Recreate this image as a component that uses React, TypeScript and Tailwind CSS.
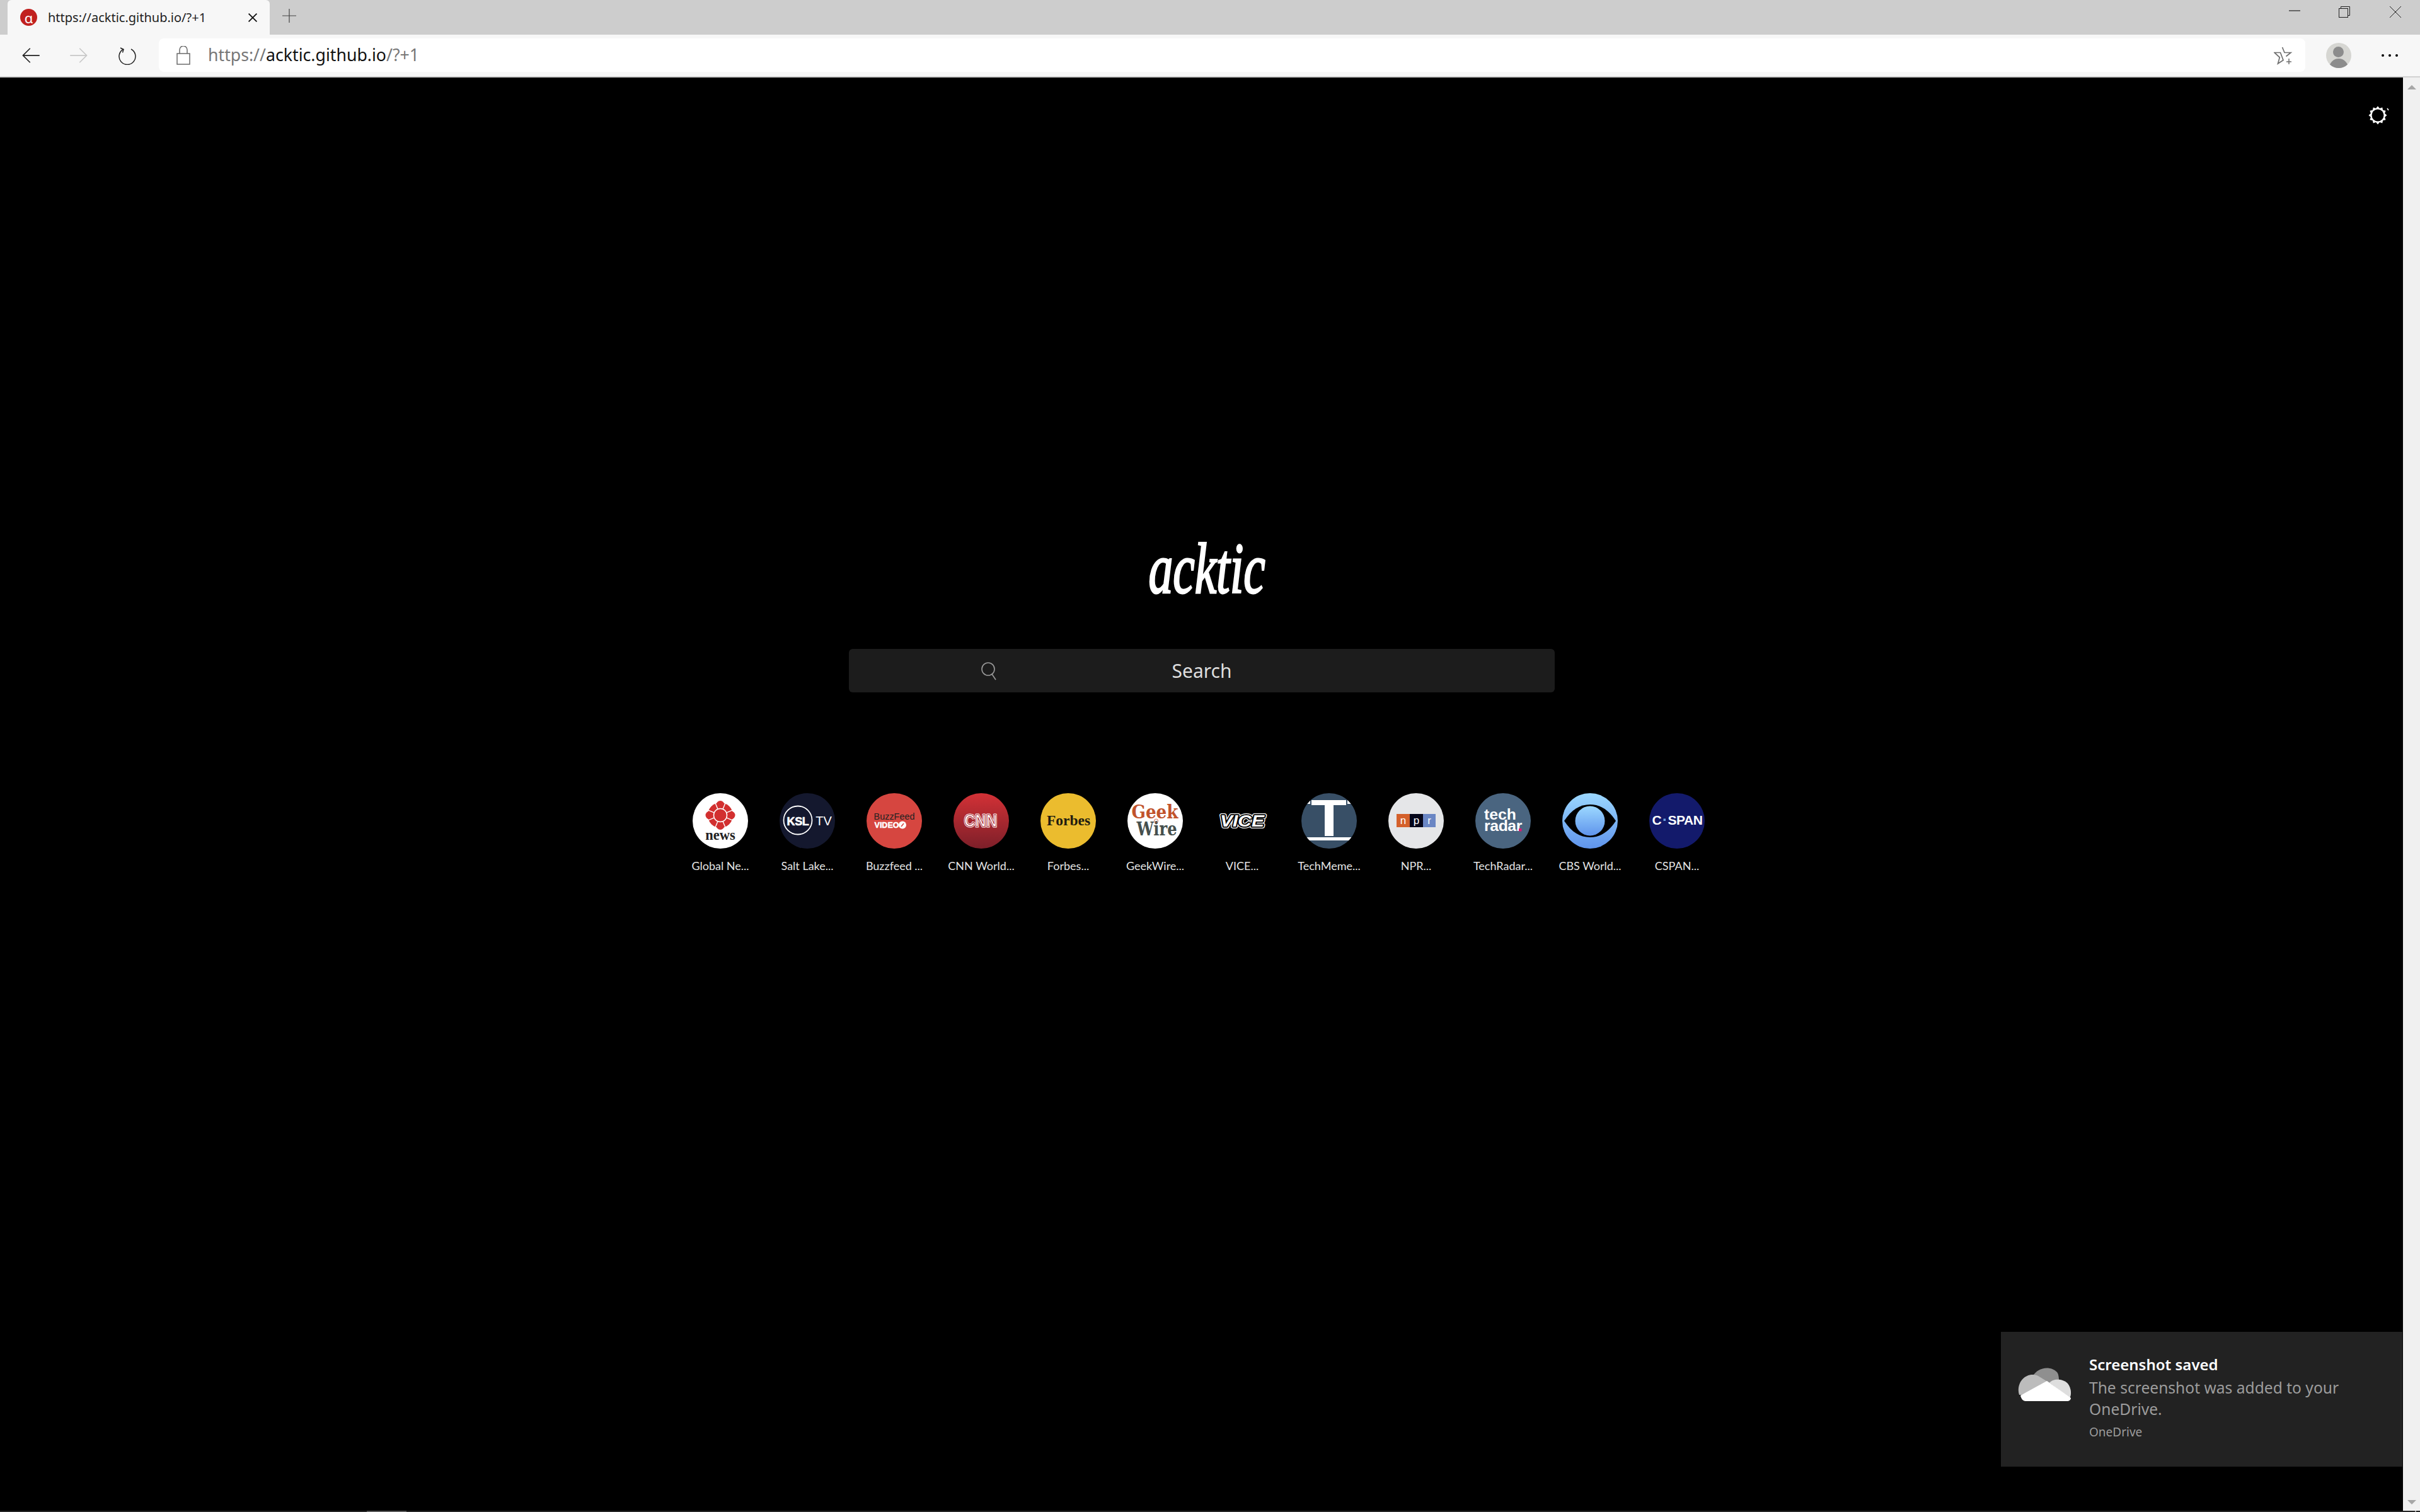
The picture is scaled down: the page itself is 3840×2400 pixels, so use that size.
import React from "react";

const sans = "font-['Lato',sans-serif]";
const T = ({ x, y, s, f = "#fff", w = 700, fam = "Liberation Sans", ls, tl, st, sw, children }: any) => (
  <text x={x} y={y} fontSize={s} fill={f} fontWeight={w} fontFamily={`'${fam}',sans-serif`} textAnchor="middle" letterSpacing={ls} textLength={tl} lengthAdjust={tl ? "spacingAndGlyphs" : undefined} stroke={st} strokeWidth={sw} strokeLinejoin="round">{children}</text>
);

const gearPoints = Array.from({ length: 24 }, (_, i) => {
  const r = i % 2 === 0 ? 14.5 : 11.5;
  const a = (i * Math.PI) / 12;
  return `${15 + r * Math.sin(a)},${15 - r * Math.cos(a)}`;
}).join(" ");

const gemAngles = [22.5, 67.5, 112.5, 157.5];

const logos: { label: string; logo: React.ReactNode }[] = [
  { label: "Global Ne...", logo: (
    <svg viewBox="0 0 88 88" className="h-[88px] w-[88px]">
      <circle cx="44" cy="44" r="44" fill="#fff" />
      <g fill="#d22f2f">
        <circle cx="44" cy="35" r="20" />
        <circle cx="44" cy="18.5" r="6.5" />
        <circle cx="44" cy="51.5" r="6.5" />
        <circle cx="27" cy="35" r="6.5" />
        <circle cx="61" cy="35" r="6.5" />
      </g>
      <g stroke="#fff" strokeWidth="1.4">
        {gemAngles.map((a) => (
          <line key={a} x1="44" y1="6" x2="44" y2="64" transform={`rotate(${a} 44 35)`} />
        ))}
      </g>
      <circle cx="44" cy="35" r="10.5" fill="#d22f2f" stroke="#fff" strokeWidth="1.5" />
      <T x="44" y="74" s="22.5" f="#222" fam="Liberation Serif">news</T>
    </svg>
  ) },
  { label: "Salt Lake...", logo: (
    <svg viewBox="0 0 88 88" className="h-[88px] w-[88px]">
      <circle cx="44" cy="44" r="44" fill="#14182e" />
      <circle cx="29" cy="43" r="22.5" fill="none" stroke="#fff" strokeWidth="1.8" />
      <T x="29" y="50.5" s="18" st="#fff" sw="0.6" ls="-0.3">KSL</T>
      <T x="70" y="51" s="20" w={400}>TV</T>
    </svg>
  ) },
  { label: "Buzzfeed ...", logo: (
    <svg viewBox="0 0 88 88" className="h-[88px] w-[88px]">
      <circle cx="44" cy="44" r="44" fill="#d64640" />
      <T x="44" y="42" s="14.4" f="#222" w={400}>BuzzFeed</T>
      <T x="32" y="55" s="12.5" st="#fff" sw="0.5">VIDEO</T>
      <circle cx="57" cy="50.5" r="6" fill="#fff" />
      <path d="M55 53l4-5" stroke="#d64640" strokeWidth="1.6" />
    </svg>
  ) },
  { label: "CNN World...", logo: (
    <svg viewBox="0 0 88 88" className="h-[88px] w-[88px]">
      <defs>
        <linearGradient id="cnn" x1="0" y1="0" x2="0" y2="1">
          <stop offset="0" stopColor="#d33136" />
          <stop offset="1" stopColor="#7d1f29" />
        </linearGradient>
      </defs>
      <circle cx="44" cy="44" r="44" fill="url(#cnn)" />
      <T x="43" y="53" s="28" tl="52" st="#fff" sw="3">CNN</T>
      <T x="43" y="53" s="28" tl="52" f="none" st="#aa262f" sw="1.1">CNN</T>
    </svg>
  ) },
  { label: "Forbes...", logo: (
    <svg viewBox="0 0 88 88" className="h-[88px] w-[88px]">
      <circle cx="44" cy="44" r="44" fill="#ebbc2e" />
      <T x="44.5" y="51" s="23.5" f="#1f1c10" fam="Liberation Serif">Forbes</T>
    </svg>
  ) },
  { label: "GeekWire...", logo: (
    <svg viewBox="0 0 88 88" className="h-[88px] w-[88px]">
      <circle cx="44" cy="44" r="44" fill="#fff" />
      <T x="43.5" y="40" s="30" f="#c1532b" fam="DejaVu Serif" tl="74">Geek</T>
      <T x="46.5" y="67" s="30" f="#46504e" fam="DejaVu Serif" tl="64">Wire</T>
      <circle cx="45.5" cy="44" r="3" fill="none" stroke="#c1532b" strokeWidth="0.8" />
    </svg>
  ) },
  { label: "VICE...", logo: (
    <svg viewBox="0 0 88 88" className="h-[88px] w-[88px]">
      <g fontSize="26" fontWeight="700" fontStyle="italic" fontFamily="'Liberation Sans',sans-serif" textAnchor="middle" strokeLinejoin="round">
        <text x="44" y="53" textLength="70" lengthAdjust="spacingAndGlyphs" fill="#fff" stroke="#fff" strokeWidth="6">VICE</text>
        <text x="44" y="53" textLength="70" lengthAdjust="spacingAndGlyphs" fill="#000" stroke="#000" strokeWidth="3.6">VICE</text>
        <text x="44" y="53" textLength="70" lengthAdjust="spacingAndGlyphs" fill="#fff">VICE</text>
      </g>
    </svg>
  ) },
  { label: "TechMeme...", logo: (
    <svg viewBox="0 0 88 88" className="h-[88px] w-[88px]">
      <defs><clipPath id="tm"><circle cx="44" cy="44" r="44" /></clipPath></defs>
      <circle cx="44" cy="44" r="44" fill="#384f66" />
      <g clipPath="url(#tm)">
        <rect x="16" y="11" width="55" height="8" fill="#fff" />
        <rect x="0" y="11" width="14" height="6" fill="#fff" />
        <rect x="73" y="11" width="15" height="6" fill="#fff" />
        <rect x="37" y="18" width="14" height="50" fill="#fff" />
        <rect x="0" y="70" width="88" height="5" fill="#fff" />
      </g>
    </svg>
  ) },
  { label: "NPR...", logo: (
    <svg viewBox="0 0 88 88" className="h-[88px] w-[88px]">
      <circle cx="44" cy="44" r="44" fill="#e5e6e8" />
      <rect x="13" y="33" width="21" height="21" fill="#d4602b" />
      <rect x="34" y="33" width="21" height="21" fill="#05061a" />
      <rect x="55" y="33" width="20" height="21" fill="#6a86c4" />
      <T x="23.5" y="49" s="17" w={400}>n</T>
      <T x="44.5" y="49" s="17" w={400}>p</T>
      <T x="65" y="49" s="17" w={400}>r</T>
    </svg>
  ) },
  { label: "TechRadar...", logo: (
    <svg viewBox="0 0 88 88" className="h-[88px] w-[88px]">
      <circle cx="44" cy="44" r="44" fill="#4a6580" />
      <T x="39.5" y="42" s="24.8">tech</T>
      <T x="44" y="60" s="24.8" ls="-0.4">radar</T>
      <rect x="69" y="56" width="4.5" height="4.5" fill="#d81b73" />
    </svg>
  ) },
  { label: "CBS World...", logo: (
    <svg viewBox="0 0 88 88" className="h-[88px] w-[88px]">
      <defs>
        <linearGradient id="cbs" x1="0" y1="0" x2="0" y2="1">
          <stop offset="0" stopColor="#9cd8ff" />
          <stop offset="1" stopColor="#5f94ec" />
        </linearGradient>
      </defs>
      <circle cx="44" cy="44" r="44" fill="url(#cbs)" />
      <path d="M3 44C15 26 28 18 44 18s29 8 41 26C73 62 60 70 44 70S15 62 3 44z" fill="#000" />
      <circle cx="44" cy="44" r="23.5" fill="url(#cbs)" />
    </svg>
  ) },
  { label: "CSPAN...", logo: (
    <svg viewBox="0 0 88 88" className="h-[88px] w-[88px]">
      <defs><clipPath id="cs"><circle cx="44" cy="44" r="44" /></clipPath></defs>
      <circle cx="44" cy="44" r="44" fill="#131a6b" />
      <g clipPath="url(#cs)">
        <T x="12" y="50" s="21">C</T>
        <rect x="22.5" y="40.5" width="3.5" height="3.5" fill="#6fa3e0" />
        <T x="57" y="50" s="21" ls="-0.5">SPAN</T>
      </g>
    </svg>
  ) },
];

const Line = ({ d, c = "#222", w = 1.5, box = 24, cls = "h-6 w-6" }: any) => (
  <svg viewBox={`0 0 ${box} ${box}`} className={cls} fill="none" stroke={c} strokeWidth={w}>
    <path d={d} />
  </svg>
);

export default function App() {
  return (
    <div className={`flex h-[2400px] w-[3840px] flex-col overflow-hidden bg-black ${sans}`}>
      {/* Tab strip */}
      <div className="flex h-[55px] items-start bg-[#cdcdcd] pl-[12px]">
        <div className="flex h-[55px] w-[416px] items-center rounded-t-[6px] bg-[#f7f7f7] pl-[20px] font-['Noto_Sans',sans-serif]">
          <span className="flex h-[27px] w-[27px] shrink-0 items-center justify-center rounded-full bg-[#c1211f] text-[22px] leading-none text-white">α</span>
          <span className="ml-[17px] w-[254px] shrink-0 whitespace-nowrap text-[20px] text-[#222]">https://acktic.github.io/?+1</span>
          <Line d="M5 5l14 14M19 5L5 19" c="#111" w={2} cls="ml-[60px] h-[22px] w-[22px] shrink-0" />
        </div>
        <Line d="M12 1v22M1 12h22" c="#444" w={1.2} cls="ml-[19px] mt-[13px] h-[24px] w-[24px]" />
        <div className="ml-auto flex items-center">
          <Line d="M0 12h18" c="#222" w={1.2} box={18} cls="h-[18px] w-[18px]" />
          <svg viewBox="0 0 18 18" className="ml-[61px] mt-[10px] h-[18px] w-[18px]" fill="none" stroke="#222" strokeWidth="1">
            <rect x="0.5" y="3.5" width="14" height="14" />
            <path d="M3.5 3.5v-3h14v14h-3" />
          </svg>
          <Line d="M0 0l18 18M18 0L0 18" c="#222" w={1} box={18} cls="ml-[63px] mr-[30px] mt-[9px] h-[18px] w-[18px]" />
        </div>
      </div>
      {/* Toolbar */}
      <div className="flex h-[68px] items-center border-b-[2px] border-[#d2d2d2] bg-[#f7f7f7] pb-[1px]">
        <Line d="M2 12h21M11 3l-9 9 9 9" c="#222" w={1.4} cls="ml-[34px] h-[30px] w-[30px]" />
        <Line d="M22 12H1M13 3l9 9-9 9" c="#c8c8c8" w={1.4} cls="ml-[46px] h-[30px] w-[30px]" />
        <svg viewBox="0 0 30 30" className="ml-[47px] h-[30px] w-[30px]" fill="none" stroke="#222" strokeWidth="1.5">
          <path d="M9 5a13 13 0 1 0 12 0" />
          <path d="M4 3l5 2.5-1.5 5" />
        </svg>
        <div className="ml-[35px] flex h-[53px] flex-1 items-center rounded-[8px] bg-white">
          <svg viewBox="0 0 22 30" className="ml-[28px] h-[30px] w-[22px]" fill="none" stroke="#6b6b6b" strokeWidth="1.5">
            <rect x="1" y="12" width="20" height="17" />
            <path d="M5 12V6a6 6 0 0 1 12 0v6" />
          </svg>
          <span className="ml-[28px] font-['Noto_Sans',sans-serif] text-[26.7px] text-[#777]">https://<span className="text-[#111]">acktic.github.io</span>/?+1</span>
          <svg viewBox="0 0 30 30" className="ml-auto mr-[20px] h-[30px] w-[30px]" fill="none" stroke="#6f6f6f" strokeWidth="1.7">
            <path d="M13.5 2l3.5 8.5h10L19.5 16.5M15 22.5L6.5 28l2.8-10L1 10.5h9.5z" />
            <path d="M24 20v9M20 25h8" strokeWidth="1.5" />
          </svg>
        </div>
        <div className="relative ml-[33px] h-[40px] w-[40px] overflow-hidden rounded-full bg-[#d6d6d2]">
          <span className="absolute left-[11px] top-[6px] h-[17px] w-[17px] rounded-full bg-[#8c8c8c]" />
          <span className="absolute left-[5px] top-[25px] h-[30px] w-[30px] rounded-full bg-[#8c8c8c]" />
        </div>
        <div className="ml-[48px] mr-[35px] flex gap-[7px]">
          <span className="h-[4px] w-[4px] rounded-full bg-black" />
          <span className="h-[4px] w-[4px] rounded-full bg-black" />
          <span className="h-[4px] w-[4px] rounded-full bg-black" />
        </div>
      </div>
      {/* Page */}
      <div className="flex flex-1">
        <main className="relative flex flex-1 flex-col items-center bg-black pt-[740px]">
          <svg viewBox="0 0 36 30" className="absolute right-[19px] top-[45px] h-[30px] w-[36px]">
            <polygon points={gearPoints} fill="#fff" />
            <circle cx="15" cy="15" r="9.5" fill="#000" />
            <path d="M30 4l2 3" stroke="#fff" strokeWidth="1.6" />
          </svg>
          <div className="ml-[18px] h-[80px] origin-center scale-x-[.68] font-['Liberation_Serif',serif] text-[114px] italic leading-[80px] text-white [-webkit-text-stroke:3px_white]">acktic</div>
          <div className="mt-[87px] flex h-[69px] w-[1120px] items-center rounded-[6px] bg-[#1c1c1c]">
            <svg viewBox="0 0 28 30" className="ml-[208px] h-[30px] w-[28px]" fill="none" stroke="#9a9a9a" strokeWidth="1.6">
              <circle cx="13" cy="12" r="10" />
              <path d="M19 20l6 9" />
            </svg>
            <span className="ml-[277px] font-['Noto_Sans',sans-serif] text-[30px] text-[#dedede]">Search</span>
          </div>
          <div className="mr-[9px] mt-[160px] grid grid-cols-[repeat(12,138px)]">
            {logos.map((l) => (
              <div key={l.label} className="flex flex-col items-center">
                <div className="h-[88px] w-[88px]">{l.logo}</div>
                <div className="mt-[15px] whitespace-nowrap text-[18px] leading-[24px] text-[#e4e4e4]">{l.label}</div>
              </div>
            ))}
          </div>
          {/* Toast */}
          <div className="absolute bottom-[70px] right-[1px] flex h-[214px] w-[637px] bg-[#222] font-['Noto_Sans',sans-serif]">
            <svg viewBox="0 0 85 54" className="ml-[27px] mt-[56px] h-[54px] w-[85px]">
              <path d="M24 14C30 2 50-4 62 8c2 2 3 8 3 12L40 32z" fill="#8f8f8f" />
              <path d="M2 44C-4 24 14 6 32 14l18 11L6 44z" fill="#bcbcbc" />
              <path d="M50 25c6-8 22-6 28 0 6 6 8 18 4 24L50 25z" fill="#dedede" />
              <path d="M4 45l42-23 38 27c0 3-3 5-6 5H12c-4 0-7-4-8-9z" fill="#fff" />
            </svg>
            <div className="ml-[28px] pt-[36px]">
              <div className="text-[24px] font-semibold leading-[32px] text-white">Screenshot saved</div>
              <div className="mt-[4px] w-[430px] text-[24.6px] leading-[34px] text-[#9c9c9c]">The screenshot was added to your OneDrive.</div>
              <div className="mt-[7px] text-[19px] leading-[24px] text-[#9c9c9c]">OneDrive</div>
            </div>
          </div>
        </main>
        {/* Vertical scrollbar */}
        <div className="flex w-[27px] flex-col items-center justify-between bg-[#f0f0f0] pb-[10px] pt-[12px]">
          <span className="h-0 w-0 border-x-[7px] border-b-[7px] border-x-transparent border-b-[#a6a6a6]" />
          <span className="h-0 w-0 border-x-[7px] border-t-[7px] border-x-transparent border-t-[#a6a6a6]" />
        </div>
      </div>
      {/* Bottom edge strip */}
      <div className="flex h-[2px] bg-[#262626] pl-[582px]">
        <span className="h-[2px] w-[63px] bg-[#5a5a5a]" />
        <span className="ml-[3187px] h-[2px] w-[2px] bg-[#999]" />
      </div>
    </div>
  );
}
